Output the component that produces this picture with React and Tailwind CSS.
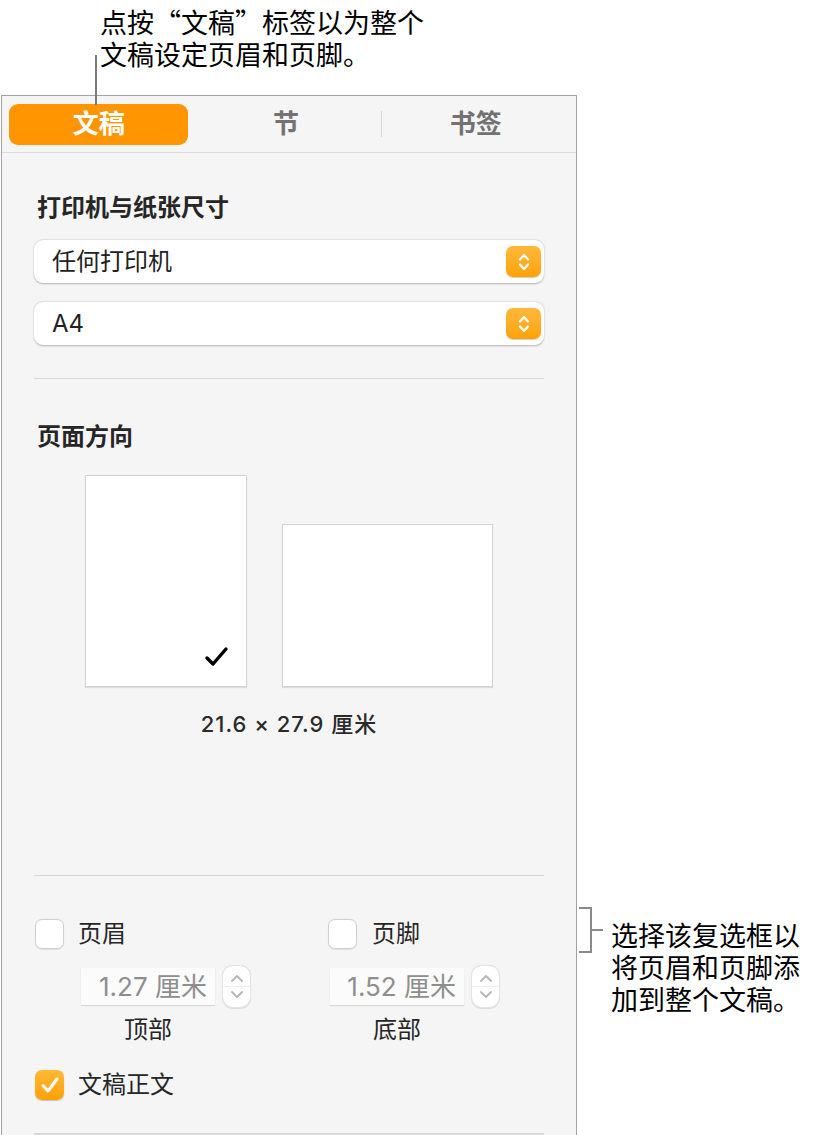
import React from 'react'

function PopupChevrons() {
  return (
    <div className="w-[35px] h-[31px] rounded-[7px] bg-linear-to-b from-[#ffb938] to-[#ffa200] flex items-center justify-center shadow-[0_0.5px_1px_rgba(0,0,0,0.2)]">
      <svg width="14" height="22" viewBox="0 0 14 22" fill="none" stroke="white" strokeWidth="2.2" strokeLinecap="round" strokeLinejoin="round">
        <path d="M3 8.5 L7 4 L11 8.5" />
        <path d="M3 13.5 L7 18 L11 13.5" />
      </svg>
    </div>
  )
}

function Popup({ label, className = '' }) {
  return (
    <div className={`h-[43px] bg-white rounded-[9px] shadow-[0_0.5px_2px_rgba(0,0,0,0.28)] flex items-center pl-[18px] pr-[3px] ${className}`}>
      <span className="flex-1 text-[24px] leading-[32px] text-[#222]">{label}</span>
      <PopupChevrons />
    </div>
  )
}

function Checkbox({ checked }) {
  if (checked) {
    return (
      <div className="w-[29px] h-[30px] rounded-[7px] bg-linear-to-b from-[#ffb933] to-[#ffa000] flex items-center justify-center shadow-[0_0.5px_1px_rgba(0,0,0,0.2)]">
        <svg width="20" height="18" viewBox="0 0 20 18" fill="none" stroke="white" strokeWidth="3" strokeLinecap="round" strokeLinejoin="round">
          <path d="M3 9.5 L8 15 L17 3" />
        </svg>
      </div>
    )
  }
  return <div className="w-[29px] h-[30px] rounded-[7px] bg-white border border-[#cfcfcf] shadow-[0_0.5px_1px_rgba(0,0,0,0.08)]" />
}

function NumberField({ value, label }) {
  return (
    <div className="flex flex-col">
      <div className="flex items-center gap-[7px]">
        <div className="w-[134px] h-[37px] bg-[#fbfbfb] shadow-[0_1px_1px_rgba(0,0,0,0.12)] flex items-center justify-end pr-[8px] text-[26px] leading-[32px] text-[#8e8e8e]">
          {value}
        </div>
        <div className="w-[29px] h-[43px] rounded-[11px] bg-white border border-[#e3e3e3] shadow-[0_0.5px_1px_rgba(0,0,0,0.1)] flex flex-col items-center justify-center">
          <svg width="16" height="12" viewBox="0 0 16 12" fill="none" stroke="#b8b8b8" strokeWidth="2" strokeLinecap="round" strokeLinejoin="round">
            <path d="M3 9 L8 4 L13 9" />
          </svg>
          <div className="w-full h-px bg-[#eeeeee] my-[2px]" />
          <svg width="16" height="12" viewBox="0 0 16 12" fill="none" stroke="#b8b8b8" strokeWidth="2" strokeLinecap="round" strokeLinejoin="round">
            <path d="M3 3 L8 8 L13 3" />
          </svg>
        </div>
      </div>
      <div className="w-[134px] mt-[6px] text-center text-[24px] leading-[32px] text-[#262626]">{label}</div>
    </div>
  )
}

export default function App() {
  return (
    <div className="w-[817px] h-[1135px] bg-white overflow-hidden flex font-['Inter','Noto_Sans_CJK_SC',sans-serif]">
      <div className="w-[577px] flex flex-col relative">
        <div className="h-[95px] pl-[100px] pt-[6px] text-[27px] leading-[32px] text-black font-['Noto_Sans_CJK_SC',sans-serif]">
          <div>
            点按<span className="inline-block w-[27px] text-right">“</span>文稿<span className="inline-block w-[27px] text-left">”</span>标签以为整个
          </div>
          <div>文稿设定页眉和页脚。</div>
        </div>
        <div className="absolute left-[95px] top-[55px] w-[2px] h-[50px] bg-[#7a7a7a]" />

        <div className="flex-1 ml-px border border-b-0 border-[#a2a2a2] bg-[#f5f5f5]">
          <div className="grid grid-cols-3 h-[57px] border-b border-[#dcdcdc] items-center pr-[6px]">
            <div className="pl-[7px] pr-[3px]">
              <div className="h-[41px] rounded-[9px] bg-[#ff9500] flex items-center justify-center text-white text-[26px] font-bold leading-[32px]">
                文稿
              </div>
            </div>
            <div className="text-center text-[26px] font-bold leading-[32px] text-[#727272]">节</div>
            <div className="flex items-center">
              <div className="w-px h-[26px] bg-[#d6d6d6]" />
              <div className="flex-1 text-center text-[26px] font-bold leading-[32px] text-[#727272]">书签</div>
            </div>
          </div>

          <div className="px-[32px] pt-[39px] text-[#262626]">
            <div className="pl-[3px] text-[24px] font-bold leading-[32px]">打印机与纸张尺寸</div>
            <Popup label="任何打印机" className="mt-[16px]" />
            <Popup label="A4" className="mt-[19px]" />
            <div className="mt-[33px] h-px bg-[#d8d8d8]" />

            <div className="mt-[42px] pl-[3px] text-[24px] font-bold leading-[32px]">页面方向</div>
            <div className="mt-[22px] flex justify-center items-end gap-[35px]">
              <div className="w-[162px] h-[212px] bg-white border border-[#d4d4d4] shadow-[0_1px_1px_rgba(0,0,0,0.1)] flex items-end justify-end pr-[16px] pb-[18px]">
                <svg width="26" height="22" viewBox="0 0 26 22" fill="none" stroke="black" strokeWidth="3.4" strokeLinecap="round" strokeLinejoin="round">
                  <path d="M3 12 L9 18 L22 3" />
                </svg>
              </div>
              <div className="w-[211px] h-[163px] bg-white border border-[#d4d4d4] shadow-[0_1px_1px_rgba(0,0,0,0.1)]" />
            </div>
            <div className="mt-[22px] text-center text-[22px] font-medium tracking-[1px] leading-[30px] text-[#2a2a2a]">21.6 × 27.9 厘米</div>

            <div className="mt-[136px] h-px bg-[#d8d8d8]" />

            <div className="mt-[43px] flex items-center h-[30px]">
              <div className="w-[294px] flex items-center gap-[14px] pl-px">
                <Checkbox />
                <span className="text-[24px] leading-[32px]">页眉</span>
              </div>
              <div className="flex items-center gap-[15px]">
                <Checkbox />
                <span className="text-[24px] leading-[32px]">页脚</span>
              </div>
            </div>

            <div className="mt-[16px] flex pl-[47px] gap-[79px]">
              <NumberField value="1.27 厘米" label="顶部" />
              <NumberField value="1.52 厘米" label="底部" />
            </div>

            <div className="mt-[24px] flex items-center h-[30px] gap-[14px] pl-px">
              <Checkbox checked />
              <span className="text-[24px] leading-[32px]">文稿正文</span>
            </div>

            <div className="mt-[33px] h-[2px] bg-[#d8d8d8]" />
          </div>
        </div>
      </div>

      <div className="flex-1 pt-[907px] flex items-start">
        <div className="flex items-center h-[46px] ml-[2px]">
          <div className="w-[13px] h-[46px] border-t-2 border-r-2 border-b-2 border-[#8a8a8a]" />
          <div className="w-[11px] h-[2px] bg-[#8a8a8a]" />
        </div>
        <div className="ml-[8px] mt-[12px] text-[27px] leading-[32px] text-black font-['Noto_Sans_CJK_SC',sans-serif]">
          <div>选择该复选框以</div>
          <div>将页眉和页脚添</div>
          <div>加到整个文稿。</div>
        </div>
      </div>
    </div>
  )
}
